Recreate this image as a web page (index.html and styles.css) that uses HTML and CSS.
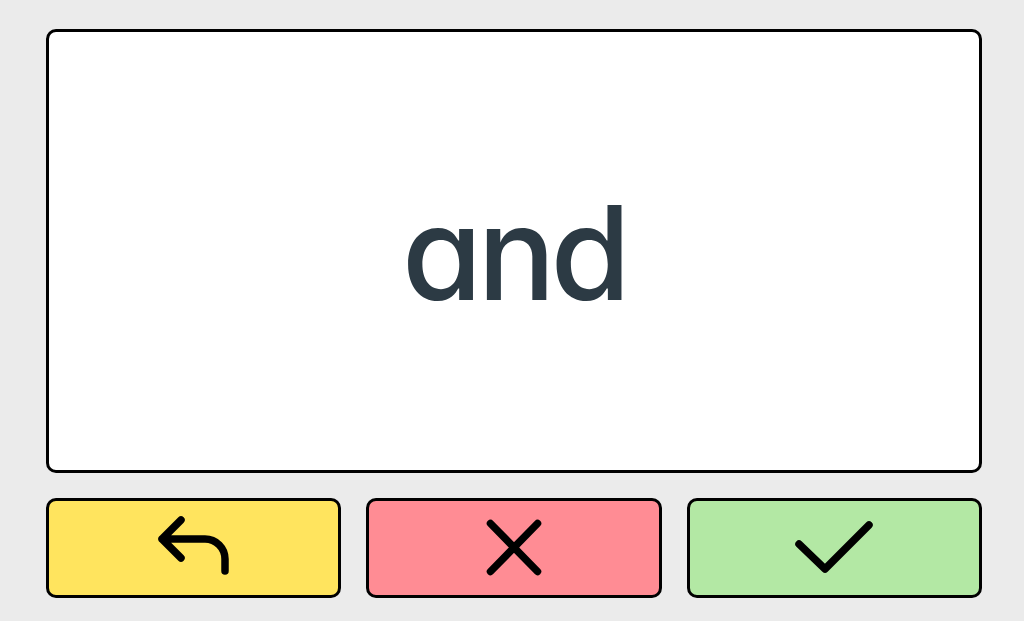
FILE: index.html
```html
<!DOCTYPE html>
<html lang="en">
<head>
<meta charset="utf-8">
<title>Flashcard</title>
<link rel="stylesheet" href="styles.css">
</head>
<body>
<main class="app">
  <section class="card">
    <span class="word">and</span>
  </section>
  <div class="actions">
    <button class="btn btn-undo" aria-label="Undo">
      <svg width="100" height="80" viewBox="0 0 100 80" class="icon">
        <path d="M37 12 L18 31 L37 50 M18 31 H61 A20 20 0 0 1 81 51 V63" />
      </svg>
    </button>
    <button class="btn btn-wrong" aria-label="Wrong">
      <svg width="100" height="80" viewBox="0 0 100 80" class="icon">
        <path d="M26.5 15.5 L73.5 63.5 M73.5 15.5 L26.5 63.5" />
      </svg>
    </button>
    <button class="btn btn-right" aria-label="Right">
      <svg width="100" height="80" viewBox="0 0 100 80" class="icon">
        <path d="M15 36 L41 61 L85 17" />
      </svg>
    </button>
  </div>
</main>
</body>
</html>
```
FILE: styles.css
```css
html, body {
  margin: 0;
  padding: 0;
  background: #ebebeb;
}
.app {
  box-sizing: border-box;
  width: 1024px;
  height: 621px;
  padding: 29px 42px 23px 46px;
  display: flex;
  flex-direction: column;
  gap: 25px;
}
.card {
  flex: 0 0 444px;
  box-sizing: border-box;
  background: #ffffff;
  border: 3px solid #000;
  border-radius: 10px;
  display: flex;
  align-items: center;
  justify-content: center;
}
.word {
  font-family: Inter, "Noto Sans", sans-serif;
  font-feature-settings: "cv11" 1, "ss07" 1;
  font-size: 130px;
  font-weight: 500;
  color: #2c3a44;
  letter-spacing: -5px;
  line-height: 1;
  margin-top: 4px;
}
.actions {
  flex: 0 0 100px;
  display: grid;
  grid-template-columns: 1fr 1fr 1fr;
  gap: 25px;
}
.btn {
  box-sizing: border-box;
  border: 3px solid #000;
  border-radius: 10px;
  padding: 0;
  margin: 0;
  display: flex;
  align-items: center;
  justify-content: center;
  cursor: pointer;
}
.btn-undo { background: #ffe45e; }
.btn-wrong { background: #ff8c94; }
.btn-right { background: #b3e8a4; }
.icon {
  display: block;
  fill: none;
  stroke: #000;
  stroke-width: 7.5;
  stroke-linecap: round;
  stroke-linejoin: round;
}
```
